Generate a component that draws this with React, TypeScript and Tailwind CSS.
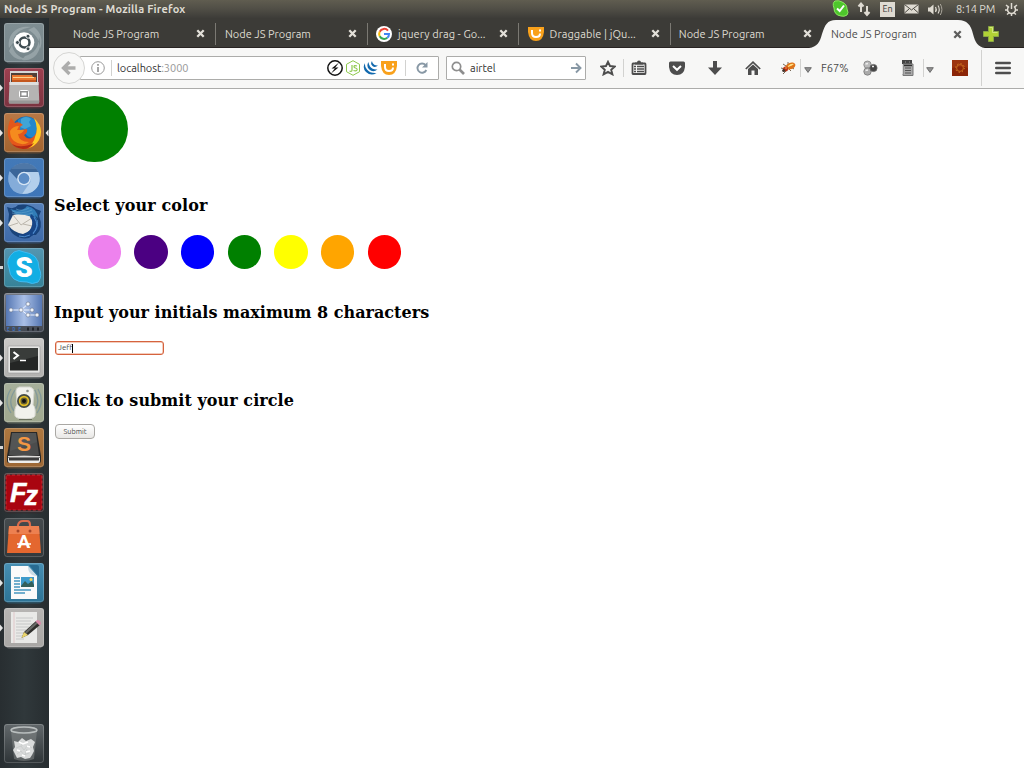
import type { ReactNode } from "react";

const UI = "font-['Ubuntu','Noto_Sans',sans-serif]";

function Tile({ id, from, to, children }: { id: string; from: string; to: string; children: ReactNode }) {
  return (
    <svg className="block h-[42px] w-10 shrink-0" viewBox="0 0 40 42">
      <defs>
        <linearGradient id={id} x1="0" y1="0" x2="0" y2="1">
          <stop offset="0" stopColor={from} />
          <stop offset="1" stopColor={to} />
        </linearGradient>
      </defs>
      <rect x="2" y="3" width="36" height="38.5" rx="3" fill={to} opacity="0.45" />
      <rect x="0" y="1" width="40" height="39" rx="3" fill={`url(#${id})`} />
      <rect x="0.5" y="1.5" width="39" height="38" rx="2.5" fill="none" stroke="#fff" strokeOpacity="0.18" />
      {children}
    </svg>
  );
}

function Launcher() {
  const items: { icon: ReactNode; mark?: "arrow" | "bar"; active?: boolean }[] = [
    {
      icon: (
        <Tile id="dash" from="#7f8e93" to="#77868b">
          <path d="M5 26C3 10 15 3 27 5C16 7 9 12 9 21ZM18 38C31 40 39 28 35 15C35 25 30 32 21 34ZM30 5C38 11 39 20 36 27C36 18 31 11 24 8ZM5 29C9 36 15 39 21 37C15 35 9 30 8 23Z" fill="#a9b4b7" opacity=".6" />
          <circle cx="20" cy="20.500" r="10.300" fill="#fff" />
          <circle cx="20.500" cy="20.500" r="5" fill="none" stroke="#3c4a50" strokeWidth="2.500" />
          <g fill="#3c4a50" stroke="#fff" strokeWidth=".9">
            <circle cx="13.400" cy="20.500" r="2" />
            <circle cx="24" cy="14.200" r="2" />
            <circle cx="24" cy="26.800" r="2" />
          </g>
        </Tile>
      ),
    },
    {
      mark: "arrow",
      icon: (
        <Tile id="files" from="#9d4050" to="#7b3340">
          <path d="M6 4h28v13H6Z" fill="#d8d7d6" />
          <path d="M7 6h26v10H7Z" fill="#514039" />
          <path d="M8 8h20l1 2h3v6H8Z" fill="#e9772f" />
          <path d="M9 10h21v1H9Z" fill="#ffd28b" />
          <path d="M8 13h24v3H8Z" fill="#c4571e" />
          <path d="M5.500 15h29l.8 20q0 1.500-2 1.500H6.700q-2 0-2-1.500Z" fill="#b5b4b3" />
          <path d="M5.500 15h29v3H5.500Z" fill="#dededd" />
          <path d="M5 33.500h30v3H5Z" fill="#989797" />
          <rect x="15.500" y="23.500" width="9" height="7" rx="1" fill="#8f8f8f" stroke="#fff" />
          <rect x="17.500" y="25.500" width="5" height="3" fill="#fff" />
        </Tile>
      ),
    },
    {
      mark: "arrow",
      active: true,
      icon: (
        <Tile id="firefox" from="#b87846" to="#a2642f">
          <circle cx="22" cy="19" r="14.500" fill="#1766ae" />
          <path d="M14 8Q22 1 31 8Q36 14 34 23Q26 29 21 21Q12 18 14 8" fill="#2287cb" />
          <path d="M17 7q5-4 10 0l-2 3 2 4-6 3-5-2 1-4Z" fill="#52b4dc" opacity=".65" />
          <path d="M7 6L11 11Q15 9 19 13Q15 14 16 18L23 17Q24 21 20 23Q24 29 29 25Q34 21 33 12Q39 20 35 28Q30 37 20 37Q6 36 4 23Q3 14 7 6Z" fill="#e4571b" />
          <path d="M30 6Q41 16 35 28Q31 35 23 36Q30 31 31 25Q35 16 30 6Z" fill="#ffcb24" />
          <path d="M6 19Q9 14 15 14L13 18L20 18Q18 22 14 22Q15 30 25 30Q18 35 10 29Q6 26 6 19Z" fill="#f58b1e" />
          <path d="M30 31Q26 37 19 37Q11 36 8 32Q17 37 30 31Z" fill="#b62b16" />
        </Tile>
      ),
    },
    {
      mark: "arrow",
      icon: (
        <Tile id="chromium" from="#4379b7" to="#3e76b9">
          <circle cx="20" cy="21.500" r="15.500" fill="#88b0db" />
          <path d="M5.500 14Q11 6 20 6Q30 6 34.500 15H20L13 22Z" fill="#3b6699" />
          <path d="M20 15H34.300Q39 28 28 35Q24 37 18 37L26.500 25Q29 18 20 15Z" fill="#b3cfec" />
          <path d="M5.500 14L13 25Q17 30 23 28L18 37Q7 36 4.500 25Q4 18 5.500 14Z" fill="#84acd9" />
          <circle cx="20" cy="21.500" r="6.800" fill="#d6e5f4" />
          <circle cx="20" cy="21.500" r="5.400" fill="#5b8cc5" />
          <path d="M7 12Q12 6 20 6Q29 6 33 12Z" fill="#7aa0cb" opacity=".3" />
        </Tile>
      ),
    },
    {
      mark: "arrow",
      icon: (
        <Tile id="thunderbird" from="#5580b9" to="#3e6aa8">
          <path d="M5 12L3 5Q10 8 14 3Q25 1 32 7L37 9L35 14Q40 26 32 33L29 33L25 36Q15 38 8 31Q3 25 5 12Z" fill="#1a447a" />
          <path d="M6 7Q18 11 23 4Q33 6 34 16L31 13Q37 23 29 32Q32 24 28 18Q22 11 13 13Z" fill="#317db8" />
          <path d="M4 23L9 13Q17 11 28 15L31 21Q28 29 19 32Q10 31 4 23Z" fill="#edeae4" />
          <path d="M9 13L17 23L28 16M5 24L14 21M19 22L28 24" fill="none" stroke="#bbb6ac" />
          <path d="M27 12Q40 22 32 31Q23 39 11 32Q23 35 27 26Q30 20 26 15Z" fill="#174587" />
          <path d="M30 15Q36 24 29 32M33 18Q35 25 29 31M26 33Q20 36 15 34" fill="none" stroke="#4c8acb" />
          <path d="M12 7Q18 10 25 6M8 9Q17 13 28 8M8 11Q20 14 29 11" fill="none" stroke="#63a2cd" strokeWidth=".6" />
        </Tile>
      ),
    },
    {
      mark: "bar",
      icon: (
        <Tile id="skype" from="#5596b0" to="#368298">
          <path d="M10 5Q15 2 20 5Q35 7 35 21Q39 29 34 35Q28 38 23 35Q6 36 5 21Q1 12 10 5Z" fill="#12aee4" stroke="#42baf0" />
          <text x="20" y="29.500" textAnchor="middle" fill="white" className="font-['Roboto',sans-serif] text-[28px] font-black">S</text>
        </Tile>
      ),
    },
    {
      icon: (
        <Tile id="kde" from="#737984" to="#424852">
          <defs>
            <linearGradient id="kdeScreen">
              <stop offset="0" stopColor="#5577b3" />
              <stop offset=".5" stopColor="#a9bfe6" />
              <stop offset="1" stopColor="#5577b3" />
            </linearGradient>
          </defs>
          <rect x="2" y="3" width="36" height="31" fill="url(#kdeScreen)" />
          <path d="M7 18H28M17 18L24 12M17 18L24 23H33" fill="none" stroke="#edf3ff" strokeWidth="1" />
          <g fill="#f0f4fa" stroke="#59657c" strokeWidth=".5">
            <circle cx="7" cy="18" r="2" />
            <circle cx="17" cy="18" r="2" />
            <circle cx="24" cy="12" r="2" />
            <circle cx="28" cy="18" r="2" />
            <circle cx="24" cy="23" r="2" />
            <circle cx="33" cy="23" r="2" />
          </g>
          <text x="3" y="38.500" fill="#4072bd" letterSpacing="3" className="font-['Roboto',sans-serif] text-[4.500px] font-bold">EDE</text>
          <path d="M23 37h2M28 37h2M33 37h2" stroke="#202329" strokeWidth="3" />
        </Tile>
      ),
    },
    {
      mark: "arrow",
      icon: (
        <Tile id="terminal" from="#cac9c7" to="#b2b1af">
          <rect x="4" y="9" width="32" height="27" rx="1" fill="#e6e6e4" stroke="#999" strokeWidth=".6" />
          <rect x="6" y="11" width="28" height="22.500" fill="#242625" />
          <path d="M6 11h28v8L6 26Z" fill="#393c3a" />
          <path d="M9.500 15L14 18.500L9.500 22" fill="none" stroke="#fff" strokeWidth="2" />
          <path d="M16 23.500h6" stroke="#fff" strokeWidth="1.500" />
        </Tile>
      ),
    },
    {
      mark: "arrow",
      icon: (
        <Tile id="speaker" from="#a7b09b" to="#a0a88f">
          <path d="M11 8Q3 20 10 29M7 7Q-1 19 7 31M31 8Q37 20 30 29M34 7Q41 19 33 31" fill="none" stroke="#66899c" strokeWidth="1.300" opacity=".55" />
          <path d="M15 5H26Q30 6 30 10L29 23Q32 25 31 34Q29 37 22 37Q12 37 11 34Q10 26 13 23L12 9Q12 6 15 5Z" fill="#f1f1ec" stroke="#d4d5ce" />
          <circle cx="20" cy="19" r="7" fill="#454c44" />
          <circle cx="20" cy="19" r="5.200" fill="#e2bd24" />
          <circle cx="20" cy="19" r="3.500" fill="#615c35" />
          <circle cx="20" cy="19" r="2" fill="#111" />
          <circle cx="23.500" cy="9" r="1.300" fill="#8c918a" />
          <path d="M15 37.500h13" stroke="#686e5c" />
        </Tile>
      ),
    },
    {
      mark: "bar",
      icon: (
        <Tile id="sublime" from="#ae7840" to="#9d6835">
          <path d="M7 5h26l4 24v5q0 2-2 2H5q-2 0-2-2v-5Z" fill="#282828" />
          <path d="M8 6h24l3 22H5Z" fill="#4b4c4c" />
          <path d="M8 6h24l1 9L6 24Z" fill="#5c5d5d" opacity=".5" />
          <path d="M4 29q16-1 32 0v1.500H4Z" fill="#dedddb" />
          <path d="M4 31h32v3q0 2-2 2H6q-2 0-2-2Z" fill="#eeeeec" />
          <path d="M5 31h30v2.500H5Z" fill="#3d3d3d" />
          <text x="20" y="24" textAnchor="middle" fill="#f49743" className="font-['Liberation_Sans',sans-serif] text-[21px] font-bold">S</text>
        </Tile>
      ),
    },
    {
      icon: (
        <Tile id="filezilla" from="#4a3436" to="#38272a">
          <rect x="2" y="3" width="36" height="35" rx="1" fill="#a90510" stroke="#c53038" strokeDasharray="3 2" />
          <text x="6" y="30" fill="white" stroke="white" strokeWidth=".5" className="font-['Liberation_Sans',sans-serif] text-[27px] font-bold italic tracking-[-2px]">
            F<tspan dy="3">z</tspan>
          </text>
        </Tile>
      ),
    },
    {
      icon: (
        <Tile id="software" from="#454b4e" to="#33393c">
          <path d="M14 16V8Q15 4 19 4H23Q26 4 26 8V16" fill="none" stroke="#db6b4c" strokeWidth="2.200" />
          <path d="M5 9H35L37 36H3Z" fill="#e4672f" />
          <path d="M5 9H35L35.500 17H4.500Z" fill="#ed8050" />
          <circle cx="14" cy="14" r="1.500" fill="#a44529" />
          <circle cx="26" cy="14" r="1.500" fill="#a44529" />
          <text x="20" y="31" textAnchor="middle" fill="white" className="font-['Roboto',sans-serif] text-[19px] font-bold">A</text>
          <path d="M13 27H27" stroke="#fff" strokeWidth="1.500" />
        </Tile>
      ),
    },
    {
      mark: "arrow",
      icon: (
        <Tile id="writer" from="#478fb3" to="#2d7497">
          <path d="M7 4H24L33 14V37H7Z" fill="#fafafa" />
          <path d="M25 3H33Q35 3 35 5V15Z" fill="#286b91" />
          <path d="M24 4L33 14Q28 14 26 11Q24 9 24 4Z" fill="#cbdde6" />
          <path d="M10 16h6M10 19h6M10 22h6M10 25h6M10 28h17M10 31h11" stroke="#4696c0" strokeWidth="1.500" />
          <rect x="17" y="15" width="13" height="10" fill="#3f9bcb" />
          <path d="M17 24L21 19L24 22L28 19L30 23V25H17Z" fill="#35605a" />
          <circle cx="27" cy="17.500" r="1.500" fill="#f8d65c" />
        </Tile>
      ),
    },
    {
      mark: "arrow",
      icon: (
        <Tile id="gedit" from="#b7b5b3" to="#a9a7a5">
          <path d="M7 5H33V36H7Z" fill="#e9e9e7" />
          <path d="M10 5V36" stroke="#deb3b5" strokeWidth=".6" />
          <path d="M12 11h17M12 14h15M12 17h17M12 20h13M12 23h10M12 26h8M12 29h6M12 32h8" stroke="#c6c7c7" />
          <path d="M17.500 31L20 25L32 14L36 18L24 28Z" fill="#302f2c" />
          <path d="M21 25L32 15L33.500 16.500L22 27Z" fill="#696967" />
          <path d="M31.500 14.500L33 13Q37 13 37 17L35.500 18.500Z" fill="#d88ba9" />
          <path d="M17.500 31L20 25L24 28Z" fill="#ead56c" />
        </Tile>
      ),
    },
  ];
  return (
    <aside className="flex w-[49px] shrink-0 flex-col bg-gradient-to-r from-[#282e31] via-[#30383b] to-[#272d30] pt-[4px] pb-[3px]">
      {items.map((item, i) => (
        <div key={i} className="flex h-[45px] shrink-0 items-start">
          <svg className="h-10 w-1 shrink-0" viewBox="0 0 4 40">
            {item.mark === "arrow" && <path d="M0 17.500L3 21L0 24.500Z" fill="#e5e5e5" />}
            {item.mark === "bar" && <path d="M0 19H3V22H0Z" fill="#d5d5d5" />}
          </svg>
          {item.icon}
          <svg className="h-10 w-[5px] shrink-0" viewBox="0 0 5 40">
            {item.active && <path d="M4.500 17.500L1.500 21L4.500 24.500Z" fill="#e5e5e5" />}
          </svg>
        </div>
      ))}
      <div className="mt-auto pl-1">
        <Tile id="trash" from="#62686b" to="#2e3437">
          <path d="M7 8L10 36Q20 40 30 36L33 8Z" fill="#888c8c" fillOpacity=".5" />
          <path d="M10 18l4 1 4-4 4 3 5-2 4 3-2 5 1 4-2 4-2 3-5 1-4-2-4 1-2-4-2-4 2-3Z" fill="#d8dada" />
          <path d="M12 25l5-2 3 4 4-5 4 3M13 31l4-3 3 4 5-2M17 18l1 5M23 26l-2 6" fill="none" stroke="#bfc2c2" strokeWidth=".6" />
          <path d="M15 19l4 2 5-2M13 27l3 1M22 29l4-1M18 32l3 1M23 23l3 1" stroke="#fff" fill="none" strokeWidth="1.500" />
          <ellipse cx="20" cy="7" rx="13" ry="3" fill="#6b7072" stroke="#b9bebe" strokeWidth="1.600" />
        </Tile>
      </div>
    </aside>
  );
}

function GoogleIcon() {
  return (
    <svg className="size-4 shrink-0" viewBox="0 0 16 16">
      <circle cx="8" cy="8" r="8" fill="#fff" />
      <g fill="none" strokeWidth="2">
        <path d="M12 4.600A5 5 0 0 0 3.700 5.700" stroke="#ea4335" />
        <path d="M3.700 5.700A5 5 0 0 0 3.700 10.300" stroke="#fbbc05" />
        <path d="M3.700 10.300A5 5 0 0 0 11.300 11.800" stroke="#34a853" />
        <path d="M11.300 11.800Q13 10.500 13 8H8" stroke="#4285f4" />
      </g>
    </svg>
  );
}

function JqIcon() {
  return (
    <svg className="size-4 shrink-0" viewBox="0 0 16 16">
      <path d="M0 1H16V6Q15 15 8 15Q1 15 0 6Z" fill="#f9a11b" />
      <path d="M4 4V7Q4 11 8 11Q12 11 12 7.500" fill="none" stroke="#fff" strokeWidth="2" />
      <path d="M11 3.500H13V5.500H11Z" fill="#fff" />
    </svg>
  );
}

function Close({ color = "#e3e0d9" }: { color?: string }) {
  return (
    <svg className="size-[9px] shrink-0" viewBox="0 0 9 9">
      <path d="M1.300 1.300L7.700 7.700M7.700 1.300L1.300 7.700" stroke={color} strokeWidth="2.300" />
    </svg>
  );
}

const tabText = "whitespace-nowrap pt-px text-[11px] leading-4";

function Tab({ title, icon }: { title: string; icon?: ReactNode }) {
  return (
    <div className="flex h-[22px] w-[151.600px] shrink-0 items-center border-r border-[#7b7973] pr-[10px] pl-[9px]">
      <div className="flex min-w-0 flex-1 items-center">
        {icon && <div className="-ml-[0.600px]">{icon}</div>}
        <span className={`${tabText} text-[#dfdbd2] ${icon ? "ml-[6px] tracking-[0.070px]" : ""}`}>{title}</span>
      </div>
      <Close />
    </div>
  );
}

function TabStrip() {
  return (
    <div className="flex h-[30px] shrink-0 items-end border-b border-[#282322] bg-[#3c3b37]">
      <div className="flex h-full min-w-0 flex-1 items-center pt-[2px]">
        <div className="flex h-[22px] w-[167px] shrink-0 items-center border-r border-[#7b7973] pr-[10px] pl-6">
          <span className={`flex-1 tracking-[0.030px] text-[#dfdbd2] ${tabText}`}>Node JS Program</span>
          <Close />
        </div>
        <Tab title="Node JS Program" />
        <Tab title="jquery drag - Go..." icon={<GoogleIcon />} />
        <Tab title="Draggable | jQu..." icon={<JqIcon />} />
        <div className="flex h-[22px] w-[141px] shrink-0 items-center pl-[8px]">
          <span className={`flex-1 text-[#dfdbd2] ${tabText}`}>Node JS Program</span>
          <Close />
        </div>
      </div>
      <div className="-mb-px grid h-[30px] w-[176px] shrink-0">
        <svg className="col-start-1 row-start-1 h-[30px] w-[176px]" viewBox="0 0 176 30">
          <path d="M0 30C8 29 11 24 13 16C16 7 18 2 27 2H149C158 2 162 7 164 16C166 24 169 29 176 30Z" fill="#f7f7f6" />
        </svg>
        <div className="col-start-1 row-start-1 flex items-center pt-[2px] pr-[23px] pl-[22px]">
          <span className="flex-1 whitespace-nowrap text-[11px] leading-4 text-[#4c4c4c]">Node JS Program</span>
          <Close color="#5e5e5d" />
        </div>
      </div>
      <svg className="mr-[25px] -mb-px -ml-[2px] h-[30px] w-4 shrink-0" viewBox="0 0 16 30">
        <path d="M5.500 8.500H10.500V13.500H15.500V18.500H10.500V23.500H5.500V18.500H.5V13.500H5.500Z" fill="#b2d235" stroke="#8aa744" />
        <path d="M6.500 9.500H9.500V14.500H14.500" fill="none" stroke="#d3e77c" />
      </svg>
    </div>
  );
}

const icon16 = "block size-4 shrink-0";

function TopBar() {
  return (
    <header className="flex h-[18px] shrink-0 items-center bg-gradient-to-b from-[#605d50] via-[#504e46] to-[#3d3c38] pl-1 text-[#dfdbd2]">
      <span className="flex-1 whitespace-nowrap text-[11px] font-bold tracking-[0.190px]">Node JS Program - Mozilla Firefox</span>
      <svg className="-mt-px mr-px h-[17px] w-[17px] shrink-0" viewBox="0 0 17 17">
        <path d="M3 1Q7 0 10 2Q15 4 15 9Q17 13 15 15Q12 17 9 16Q2 15 2 8Q0 3 3 1Z" fill="#4ec62c" stroke="#8be85f" />
        <path d="M5 8.500L7.700 11L12 5.500" fill="none" stroke="#fff" strokeWidth="2" />
      </svg>
      <svg className="ml-[7px] h-4 w-[14px] shrink-0" viewBox="0 0 14 16">
        <path d="M4 11V4M1.500 5.500L4 2.500L6.500 5.500M10 5V13M7.500 11L10 14L12.500 11" fill="none" stroke="#dfdbd2" strokeWidth="2" />
      </svg>
      <span className="ml-[9px] flex h-[15px] w-[15px] shrink-0 items-center justify-center bg-[#dfdbd2] pt-px text-[9px] leading-none text-[#3c3b37]">En</span>
      <svg className="ml-[9px] h-[10px] w-[15px] shrink-0" viewBox="0 0 15 10">
        <path d="M.5.500H14.500V9.500H.5Z" fill="#dfdbd2" />
        <path d="M.5.500L7.500 6L14.500.500M.5 9L5 5M14.500 9L10 5" fill="none" stroke="#4b4942" />
      </svg>
      <svg className="ml-[9px] h-[13px] w-[15px] shrink-0" viewBox="0 0 15 13">
        <path d="M0 4.500H2L5.500 1.500V11.500L2 8.500H0Z" fill="#dfdbd2" />
        <path d="M7.500 4Q9 6.500 7.500 9" fill="none" stroke="#dfdbd2" strokeWidth="1.300" />
        <path d="M10 2.500Q12.500 6.500 10 10.500" fill="none" stroke="#dfdbd2" strokeWidth="1.100" />
        <path d="M12.300 1Q15.500 6.500 12.300 12" fill="none" stroke="#aaa69c" />
      </svg>
      <span className="ml-[13px] w-[40px] shrink-0 whitespace-nowrap text-[11px] tracking-[-0.100px]">8:14 PM</span>
      <svg className="mr-[6px] ml-[9px] h-[13px] w-[13px] shrink-0" viewBox="0 0 13 13">
        <path d="M4 3.400A4 4 0 1 0 9 3.400" fill="none" stroke="#dfdbd2" strokeWidth="1.500" />
        <path d="M6.500 0V6" stroke="#dfdbd2" strokeWidth="1.500" />
        <path d="M1 2L3 3.600M10 3.600L12 2M0 7H2.500M10.500 7H13M2 11.500L3.800 10M9.200 10L11 11.500M6.500 11V13" stroke="#dfdbd2" strokeWidth="1.500" />
      </svg>
    </header>
  );
}

function Separator({ className }: { className: string }) {
  return <div className={`w-px shrink-0 bg-[#d2d2d0] ${className}`} />;
}

function Caret({ className }: { className: string }) {
  return (
    <svg className={`mt-[3px] h-[6px] w-2 shrink-0 ${className}`} viewBox="0 0 8 6">
      <path d="M.7.700H7.300L4 5.400Z" fill="#929292" stroke="#6d6d6d" />
    </svg>
  );
}

function Toolbar() {
  return (
    <div className="flex h-[41px] shrink-0 items-center border-b border-[#acacaa] bg-[#f7f7f6] text-[#4b4b4b]">
      <div className="flex h-8 w-[390px] shrink-0 items-center pl-1">
        <svg className="z-10 block h-8 w-8 shrink-0" viewBox="0 0 32 32">
          <circle cx="16" cy="16" r="15.500" fill="#f8f8f7" stroke="#d5d5d3" />
          <path d="M10.500 16H22.500M16.500 10L10.500 16L16.500 22" fill="none" stroke="#adadac" strokeWidth="3.300" />
        </svg>
        <div className="-ml-[5px] flex h-6 flex-1 items-center rounded-r-[1px] border border-[#acacaa] bg-white pl-[10px]">
          <svg className="h-[14px] w-[14px] shrink-0" viewBox="0 0 14 14">
            <circle cx="7" cy="7" r="6.300" fill="none" stroke="#999" />
            <path d="M7 6V11M7 3V4.700" stroke="#888" strokeWidth="1.500" />
          </svg>
          <Separator className="ml-[6px] h-4" />
          <span className="ml-[5px] flex-1 whitespace-nowrap text-[11px] tracking-[-0.060px] text-[#333]">localhost<span className="text-[#999]">:3000</span></span>
          <svg className={icon16} viewBox="0 0 16 16">
            <circle cx="8" cy="8" r="7.200" fill="#fff" stroke="#111" strokeWidth="1.500" />
            <path d="M12 2.500L4.500 8.500H7.500ZM4 13.500L11.500 7.500H8.500Z" fill="#111" />
          </svg>
          <svg className="ml-[2px] size-4 shrink-0" viewBox="0 0 16 16">
            <path d="M8 .700L14.500 4.300V11.700L8 15.300L1.500 11.700V4.300Z" fill="white" stroke="#8cc84b" />
            <path d="M7 5V10Q7 12 4.500 11M12 6Q9 5 9 6.500Q9 8 10.500 8Q12.500 8.500 12 10Q11 11.500 8.500 10.500" fill="none" stroke="#8cc84b" strokeWidth="1.200" />
          </svg>
          <svg className="ml-[2px] size-4 shrink-0" viewBox="0 0 16 16">
            <path d="M2 3Q-1 8 3 12Q8 16.500 13.500 13Q7 13.500 4 9.500Q1.500 6.500 2 3ZM5.500 2Q3 6 6 9.200Q10 13 14.500 9.500Q9.500 10 7 6.500Q5.500 4 5.500 2ZM9 1Q7 4 9.500 6Q12 8 15 5.500Q11.500 6 10 3.500Q9 2 9 1Z" fill="#1169ae" />
          </svg>
          <div className="ml-[2px]"><JqIcon /></div>
          <Separator className="ml-[8px] h-4" />
          <svg className="mr-[9px] ml-[9px] h-[14px] w-[14px] shrink-0" viewBox="0 0 14 14">
            <path d="M10.500 4A4.600 4.600 0 1 0 11.300 9" fill="none" stroke="#8898a5" strokeWidth="1.900" />
            <path d="M12.500 1V6.500H7Z" fill="#8898a5" />
          </svg>
        </div>
      </div>
      <div className="ml-[7px] flex h-6 w-[140px] shrink-0 items-center rounded-[1px] border border-[#acacaa] bg-white pr-[3px] pl-1">
        <svg className="h-[14px] w-[14px] shrink-0" viewBox="0 0 14 14">
          <circle cx="5.500" cy="5.500" r="4.200" fill="none" stroke="#8e8e8e" strokeWidth="1.700" />
          <path d="M8.500 8.500L13 13" stroke="#8e8e8e" strokeWidth="2.600" />
        </svg>
        <span className="ml-[5px] flex-1 text-[11px] text-[#333]">airtel</span>
        <svg className="h-3 w-3 shrink-0" viewBox="0 0 12 12">
          <path d="M1 6H10M6 1.500L10.500 6L6 10.500" fill="none" stroke="#8898a5" strokeWidth="1.900" />
        </svg>
      </div>
      <svg className="ml-[14px] size-4 shrink-0" viewBox="0 0 16 16">
        <path d="M8 1.800L10 6L14.800 6.500L11.200 9.700L12.400 14.300L8 11.800L3.600 14.300L4.800 9.700L1.200 6.500L6 6Z" fill="none" stroke="#4d4d4d" strokeWidth="1.900" />
      </svg>
      <Separator className="ml-[7px] h-[18px]" />
      <svg className="ml-[7px] size-4 shrink-0" viewBox="0 0 16 16">
        <path d="M2 3.500H14Q14.500 3.500 14.500 4.500V13Q14.500 14 14 14H2Q1.500 14 1.500 13V4.500Q1.500 3.500 2 3.500Z" fill="none" stroke="#4d4d4d" strokeWidth="1.800" />
        <path d="M4 4.500V2.500H6Q6 .500 8 .500Q10 .500 10 2.500H12V4.500Z" fill="#4d4d4d" />
        <path d="M3 6.500H5M6 6.500H13M3 9H5M6 9H13M3 11.500H5M6 11.500H13" stroke="#4d4d4d" strokeWidth="1.400" />
      </svg>
      <svg className="ml-[22px] size-4 shrink-0" viewBox="0 0 16 16">
        <path d="M1.500 1.500H14.500Q16 1.500 16 3V7Q15 15 8 15Q1 15 0 7V3Q0 1.500 1.500 1.500Z" fill="#4d4d4d" />
        <path d="M4 6L8 9.800L12 6" fill="none" stroke="#fff" strokeWidth="2" />
      </svg>
      <svg className="ml-[22px] size-4 shrink-0" viewBox="0 0 16 16">
        <path d="M6 1H10V7.500H15L8 15L1 7.500H6Z" fill="#4d4d4d" />
      </svg>
      <svg className="ml-[22px] size-4 shrink-0" viewBox="0 0 16 16">
        <path d="M.8 9L8 2.200L15.200 9" fill="none" stroke="#4d4d4d" strokeWidth="1.700" />
        <path d="M3 9L8 4.500L13 9V15H9.500V10.500H6.500V15H3Z" fill="#4d4d4d" />
      </svg>
      <svg className="ml-[19px] size-4 shrink-0" viewBox="0 0 16 16">
        <path d="M3 4L6 6M8 2L8 5M1 8L5 9M3 14L6 11M11 11L9 9M14 9L11 7" stroke="#55442f" strokeWidth=".8" />
        <ellipse cx="10.500" cy="6" rx="5" ry="3.300" transform="rotate(-20 10.500 6)" fill="#df7419" />
        <path d="M8 6Q11 3 14 4Q12 6 8 7Z" fill="#ffe58b" />
        <circle cx="5.500" cy="9" r="2.500" fill="#b93415" />
        <path d="M5 8L7 8" stroke="#f5a34e" />
        <circle cx="3.700" cy="10.500" r="1.500" fill="#42352c" />
      </svg>
      <Separator className="ml-1 h-[18px]" />
      <Caret className="ml-[3px]" />
      <span className="ml-[9px] w-[28px] shrink-0 whitespace-nowrap text-[11px]">F67%</span>
      <svg className="ml-[13px] size-4 shrink-0" viewBox="0 0 16 16">
        <circle cx="5.500" cy="4.700" r="3.700" fill="#bbb" stroke="#828282" strokeWidth=".8" />
        <circle cx="5.500" cy="11.500" r="3.700" fill="#aaa" stroke="#777" strokeWidth=".8" />
        <circle cx="11.500" cy="8" r="3.600" fill="#444" stroke="#666" strokeWidth=".8" />
        <path d="M3.500 4L6 3.500M3.500 10.500L6 10M10 6.500L12 6.500" stroke="#eee" strokeWidth="1.400" />
      </svg>
      <svg className="ml-[22px] size-4 shrink-0" viewBox="0 0 16 16">
        <path d="M2 0H12V4H2Z" fill="#444" />
        <path d="M3 4H13V15.500H3Z" fill="#aaa" stroke="#777" />
        <path d="M4 5.500H12" stroke="#303030" strokeWidth="1.400" />
        <path d="M5 2H6M9 2H10" stroke="#999" />
        <path d="M5 8H11M5 10.500H11M5 13H11" stroke="#555" />
        <path d="M2.500 4V14" stroke="#ddd" />
      </svg>
      <Separator className="ml-[7px] h-[18px]" />
      <Caret className="ml-[2px]" />
      <svg className="ml-[18px] size-4 shrink-0" viewBox="0 0 16 16">
        <path d="M0 0H16V16H0Z" fill="#8b2507" />
        <path d="M0 0H16V8Q8 5 0 8Z" fill="#a94015" opacity=".6" />
        <circle cx="8" cy="8" r="3.400" fill="none" stroke="#c96d1e" strokeWidth=".9" />
        <circle cx="8" cy="8" r="4.400" fill="none" stroke="#d58325" strokeDasharray="1.200 2.260" />
      </svg>
      <Separator className="ml-[13px] h-9" />
      <svg className="ml-[13px] size-4 shrink-0" viewBox="0 0 16 16">
        <path d="M1.200 3H14.800M1.200 8H14.800M1.200 13H14.800" stroke="#4d4d4d" strokeWidth="2.400" strokeLinecap="round" />
      </svg>
    </div>
  );
}

const swatches = ["bg-[#ee82ee]", "bg-[#4b0082]", "bg-[#0000ff]", "bg-[#008000]", "bg-[#ffff00]", "bg-[#ffa500]", "bg-[#ff0000]"];
const heading = "font-['DejaVu_Serif',serif] text-[16px] leading-5 font-bold whitespace-nowrap text-black";

function Page() {
  return (
    <main className="flex flex-1 flex-col items-start bg-white pl-[5px]">
      <div className="mt-[7px] ml-[7px] h-[66px] w-[67px] rounded-full bg-[#008000]" />
      <h2 className={`mt-[34px] tracking-[0.090px] ${heading}`}>Select your color</h2>
      <div className="mt-[19px] ml-[33.700px] flex gap-[13.330px]">
        {swatches.map((color) => (
          <button key={color} className={`h-[34px] w-[33.330px] rounded-full ${color}`} />
        ))}
      </div>
      <h2 className={`mt-[34px] tracking-[0.010px] ${heading}`}>Input your initials maximum 8 characters</h2>
      <div className="mt-[18px] ml-px flex h-[14px] w-[109px] items-center rounded-[3px] border border-[#d5633e] bg-white px-[2px] shadow-[inset_0_0_0_0.5px_#e99a7b]">
        <span className="text-[8px] leading-none text-[#4c4c4c]">Jeff</span>
        <span className="h-[9px] w-px bg-black" />
      </div>
      <h2 className={`mt-[36px] tracking-[0.050px] ${heading}`}>Click to submit your circle</h2>
      <button className="mt-[13px] ml-px flex h-[15px] w-10 items-center justify-center rounded-[4px] border border-[#aaa8a4] bg-gradient-to-b from-white to-[#e9e8e6] text-[7.300px] leading-none text-[#4c4c4c]">Submit</button>
    </main>
  );
}

export default function App() {
  return (
    <div className={`flex h-[768px] w-[1024px] flex-col overflow-hidden bg-white ${UI}`}>
      <TopBar />
      <div className="flex min-h-0 flex-1">
        <Launcher />
        <div className="flex min-w-0 flex-1 flex-col">
          <TabStrip />
          <Toolbar />
          <Page />
        </div>
      </div>
    </div>
  );
}
